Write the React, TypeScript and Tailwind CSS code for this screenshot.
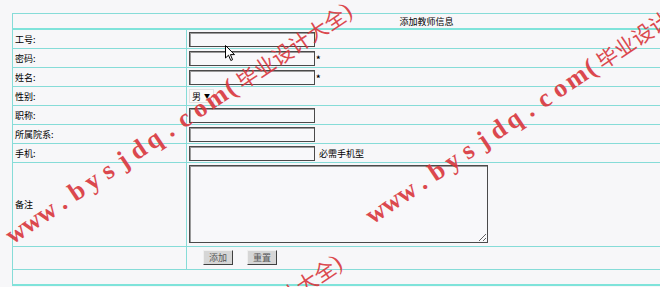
import React from "react";

const LINE = "border-[#86dcd8]";
const LATIN = "www.bysjdq.com(".split("");

function Watermark({ left, top }: { left: number; top: number }) {
  return (
    <div
      className="absolute whitespace-nowrap pointer-events-none text-[#d9363c] opacity-90 leading-[28px] flex items-end"
      style={{ left, top, transform: "rotate(-34deg)", transformOrigin: "0% 50%" }}
    >
      {LATIN.map((c, i) => (
        <span
          key={i}
          className="inline-block w-[18.5px] text-center text-[26px] font-bold"
          style={{ fontFamily: '"Liberation Serif", serif' }}
        >
          {c}
        </span>
      ))}
      <span className="text-[21px] leading-[28px]" style={{ fontFamily: '"Noto Sans CJK SC", sans-serif' }}>
        毕业设计大全
      </span>
      <span className="text-[24px]" style={{ fontFamily: '"Liberation Serif", serif' }}>
        )
      </span>
    </div>
  );
}

function Row({
  label,
  children,
  h = "h-[19px]",
}: {
  label: string;
  children?: React.ReactNode;
  h?: string;
}) {
  return (
    <div className={`flex border-b ${LINE} ${h}`}>
      <div className={`w-[174px] shrink-0 border-r ${LINE} flex items-center pl-[2px]`}>{label}</div>
      <div className="flex-1 flex items-center pl-[2px]">{children}</div>
    </div>
  );
}

function TextInput() {
  return (
    <div className="w-[126px] h-[15px] border border-[#4a4a4a] shadow-[inset_1px_1px_0_#9a9a9a] bg-[#f8f8fa]" />
  );
}

function Btn({ text }: { text: string }) {
  return (
    <div className="w-[30px] h-[15px] bg-[#d6d6d6] border border-t-[#efefef] border-l-[#efefef] border-r-[#404040] border-b-[#404040] flex items-center justify-center text-[#555]">
      {text}
    </div>
  );
}

export default function App() {
  return (
    <div
      className="relative w-[660px] h-[287px] overflow-hidden bg-[#f7f7f9] text-[9px] text-black leading-none"
      style={{ fontFamily: '"Noto Sans CJK SC", "Liberation Sans", sans-serif' }}
    >
      <div className="pt-[13px] pl-[12px]">
        <div className={`w-[828px] border-l border-t ${LINE}`}>
          <div className={`h-[16px] border-b-2 border-[#7fe3da] flex items-center justify-center`}>
            添加教师信息
          </div>
          <Row label="工号:">
            <TextInput />
          </Row>
          <Row label="密码:">
            <TextInput />
            <span className="ml-[1px] mt-[2px] text-[9px] font-bold">*</span>
          </Row>
          <Row label="姓名:">
            <TextInput />
            <span className="ml-[1px] mt-[2px] text-[9px] font-bold">*</span>
          </Row>
          <Row label="性别:">
            <div className="w-[25px] h-[14px] bg-[#fbfbfb] border border-[#e2e2e2] flex items-center pl-[2px] gap-[3px]">
              <span>男</span>
              <span className="text-[6px]">▼</span>
            </div>
          </Row>
          <Row label="职称:">
            <TextInput />
          </Row>
          <Row label="所属院系:">
            <TextInput />
          </Row>
          <Row label="手机:">
            <TextInput />
            <span className="ml-[4px]">必需手机型</span>
          </Row>
          <div className={`flex border-b ${LINE} h-[84px]`}>
            <div className={`w-[174px] shrink-0 border-r ${LINE} flex items-center pl-[2px]`}>备注</div>
            <div className="flex-1 pl-[2px] pt-[2px]">
              <textarea className="block w-[299px] h-[78px] border border-[#4a4a4a] shadow-[inset_1px_1px_0_#9a9a9a] bg-[#f8f8fa] outline-none" />
            </div>
          </div>
          <div className={`flex border-b ${LINE} h-[23px]`}>
            <div className={`w-[174px] shrink-0 border-r ${LINE}`} />
            <div className="flex-1 flex items-center pl-[16px] gap-[14px] pb-[2px]">
              <Btn text="添加" />
              <Btn text="重置" />
            </div>
          </div>
          <div className="h-[16px] border-b-2 border-[#7fe3da]" />
        </div>
      </div>

      {/* mouse cursor */}
      <svg className="absolute left-[225px] top-[45px]" width="11" height="17" viewBox="0 0 11 17">
        <path d="M0.5 0.5 L0.5 13 L3.5 10.2 L5.8 15.5 L7.6 14.7 L5.4 9.6 L9.5 9.6 Z" fill="#fff" stroke="#000" strokeWidth="1" />
      </svg>

      <Watermark left={8} top={224} />
      <Watermark left={368} top={204} />
      <Watermark left={-2} top={476} />
    </div>
  );
}
